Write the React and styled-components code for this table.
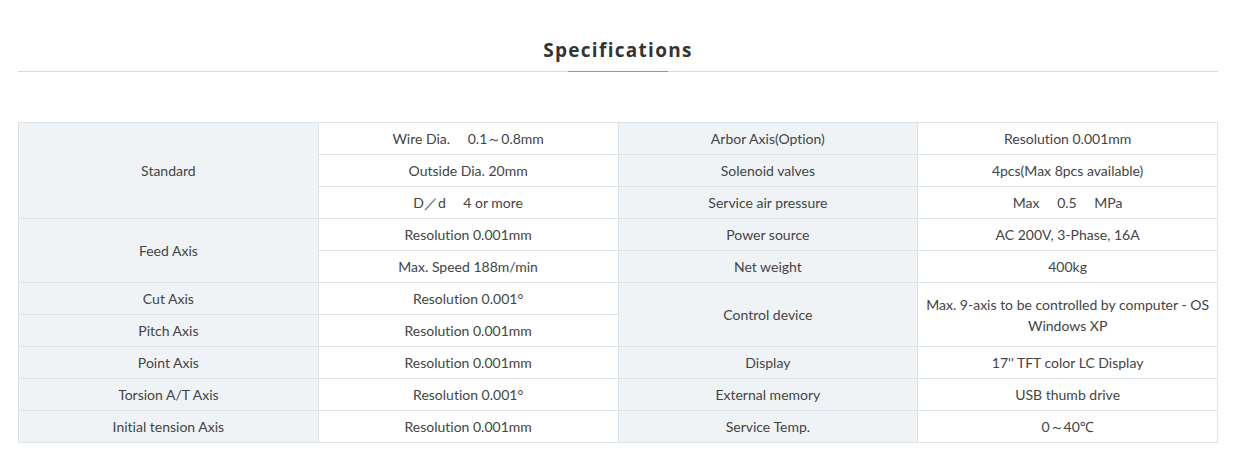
import React from "react";
import styled, { createGlobalStyle } from "styled-components";

const Global = createGlobalStyle`
  html, body { margin: 0; padding: 0; background: #fff; }
  body { font-family: Lato, "Noto Sans", sans-serif; }
`;

const Page = styled.div`
  width: 1200px;
  padding-left: 18px;
`;

const Heading = styled.div`
  position: relative;
  height: 71px;
  border-bottom: 1px solid #dcdcdc;
  display: flex;
  justify-content: center;
  align-items: flex-start;

  &::after {
    content: "";
    position: absolute;
    left: 550px;
    bottom: -1px;
    width: 100px;
    height: 1px;
    background: #33c7a0;
  }
`;

const Title = styled.h2`
  margin: 36px 0 0;
  font-family: "Open Sans", sans-serif;
  font-size: 19px;
  line-height: 28px;
  font-weight: 700;
  letter-spacing: 1.3px;
  color: #333;
`;

const Table = styled.table`
  margin-top: 50px;
  width: 1200px;
  border-collapse: collapse;
  table-layout: fixed;
  border: 1px solid #dde3e6;
`;

const Cell = styled.td`
  height: 31px;
  padding: 0 5px;
  border: 1px solid #dde3e6;
  text-align: center;
  vertical-align: middle;
  font-size: 14px;
  line-height: 21px;
  color: #444;
  white-space: pre-wrap;
  font-variant-ligatures: none;
  background: ${(p) => (p.$head ? "#eff3f6" : "#fff")};
`;

const rows = [
  [["Standard", 3, true], ["Wire Dia.\u3000 0.1\uff5e0.8mm"], ["Arbor Axis(Option)", 1, true], ["Resolution 0.001mm"]],
  [["Outside Dia. 20mm"], ["Solenoid valves", 1, true], ["4pcs(Max 8pcs available)"]],
  [["D\uff0fd\u3000 4 or more"], ["Service air pressure", 1, true], ["Max\u3000 0.5\u3000 MPa"]],
  [["Feed Axis", 2, true], ["Resolution 0.001mm"], ["Power source", 1, true], ["AC 200V, 3-Phase, 16A"]],
  [["Max. Speed 188m/min"], ["Net weight", 1, true], ["400kg"]],
  [["Cut Axis", 1, true], ["Resolution 0.001°"], ["Control device", 2, true], ["Max. 9-axis to be controlled by computer - OS Windows XP", 2]],
  [["Pitch Axis", 1, true], ["Resolution 0.001mm"]],
  [["Point Axis", 1, true], ["Resolution 0.001mm"], ["Display", 1, true], ["17'' TFT color LC Display"]],
  [["Torsion A/T Axis", 1, true], ["Resolution 0.001°"], ["External memory", 1, true], ["USB thumb drive"]],
  [["Initial tension Axis", 1, true], ["Resolution 0.001mm"], ["Service Temp.", 1, true], ["0\uff5e40\u2103"]],
];

export default function App() {
  return (
    <Page>
      <Global />
      <Heading>
        <Title>Specifications</Title>
      </Heading>
      <Table>
        <tbody>
          {rows.map((r, i) => (
            <tr key={i}>
              {r.map(([t, span = 1, head = false], j) => (
                <Cell key={j} rowSpan={span} $head={head}>
                  {t}
                </Cell>
              ))}
            </tr>
          ))}
        </tbody>
      </Table>
    </Page>
  );
}
